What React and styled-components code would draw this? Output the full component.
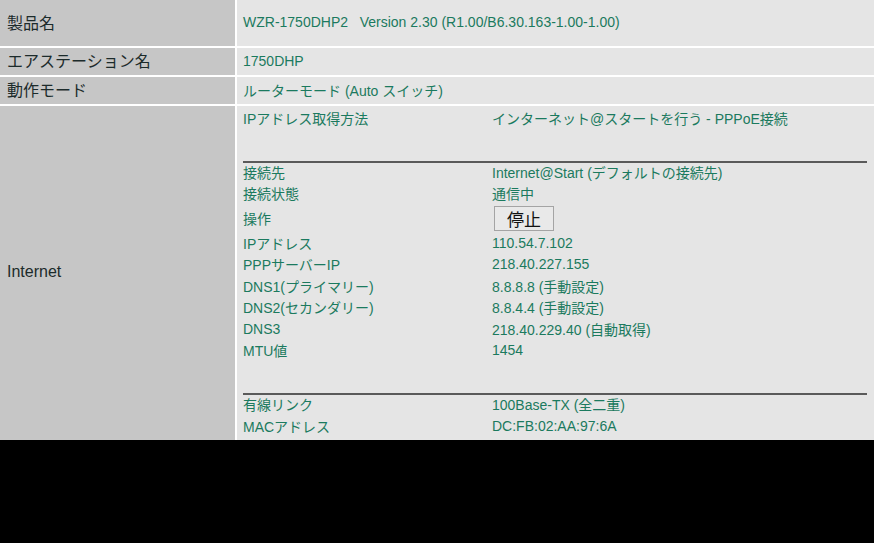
import styled, { createGlobalStyle } from 'styled-components'

const Global = createGlobalStyle`
  html, body {
    margin: 0;
    padding: 0;
    background: #000;
  }
  body {
    font-family: "Liberation Sans", "Noto Sans CJK JP", sans-serif;
  }
`

const Page = styled.div`
  width: 874px;
  height: 440px;
  overflow: hidden;
`

const Table = styled.div`
  display: grid;
  grid-template-columns: 235px 1fr;
  grid-template-rows: 46px 27px 27px 1fr;
  column-gap: 2px;
  row-gap: 2px;
  background: #fff;
  height: 440px;
`

const Label = styled.div`
  background: #c6c6c6;
  color: #1c2b2b;
  font-size: 16px;
  padding: 0 0 3px 7px;
  display: flex;
  align-items: center;
`

const Value = styled.div`
  background: #e5e5e5;
  color: #1b7a5e;
  font-size: 14px;
  padding: 0 0 2px 6px;
  display: flex;
  align-items: center;
  white-space: pre;
`

const Detail = styled.div`
  background: #e5e5e5;
  padding: 1px 7px 0 6px;
  color: #1b7a5e;
  font-size: 14px;
`

const Row = styled.div`
  display: grid;
  grid-template-columns: 249px 1fr;
  align-items: center;
  height: ${p => p.$h || 21.5}px;
  white-space: pre;
`

const Spacer = styled.div`
  height: ${p => p.$h}px;
`

const Rule = styled.div`
  height: 2px;
  background: #5a5a5a;
  margin: 0 0 -2px;
`

const Button = styled.button`
  width: 60px;
  height: 25px;
  margin-left: 2px;
  padding: 0;
  border: 1px solid #a4a4a4;
  background: #e9e9e9;
  color: #111;
  font-family: "Noto Sans CJK JP", sans-serif;
  font-size: 17px;
  line-height: 1;
`

const connection = [
  ['接続先', 'Internet@Start (デフォルトの接続先)'],
  ['接続状態', '通信中'],
  ['操作', null],
  ['IPアドレス', '110.54.7.102'],
  ['PPPサーバーIP', '218.40.227.155'],
  ['DNS1(プライマリー)', '8.8.8.8 (手動設定)'],
  ['DNS2(セカンダリー)', '8.8.4.4 (手動設定)'],
  ['DNS3', '218.40.229.40 (自動取得)'],
  ['MTU値', '1454'],
]

const wired = [
  ['有線リンク', '100Base-TX (全二重)'],
  ['MACアドレス', 'DC:FB:02:AA:97:6A'],
]

const App = () => {
  return (
    <Page>
      <Global />
      <Table>
        <Label>製品名</Label>
        <Value>WZR-1750DHP2   Version 2.30 (R1.00/B6.30.163-1.00-1.00)</Value>
        <Label>エアステーション名</Label>
        <Value>1750DHP</Value>
        <Label>動作モード</Label>
        <Value>ルーターモード (Auto スイッチ)</Value>
        <Label>Internet</Label>
        <Detail>
          <Row $h={22}>
            <span>IPアドレス取得方法</span>
            <span>インターネット@スタートを行う - PPPoE接続</span>
          </Row>
          <Spacer $h={32} />
          <Rule />
          {connection.map(([k, v]) => (
            <Row key={k} $h={v === null ? 28 : 21.5}>
              <span>{k}</span>
              {v === null ? <div><Button>停止</Button></div> : <span>{v}</span>}
            </Row>
          ))}
          <Spacer $h={32} />
          <Rule />
          {wired.map(([k, v]) => (
            <Row key={k} $h={22}>
              <span>{k}</span>
              <span>{v}</span>
            </Row>
          ))}
        </Detail>
      </Table>
    </Page>
  )
}

export default App
